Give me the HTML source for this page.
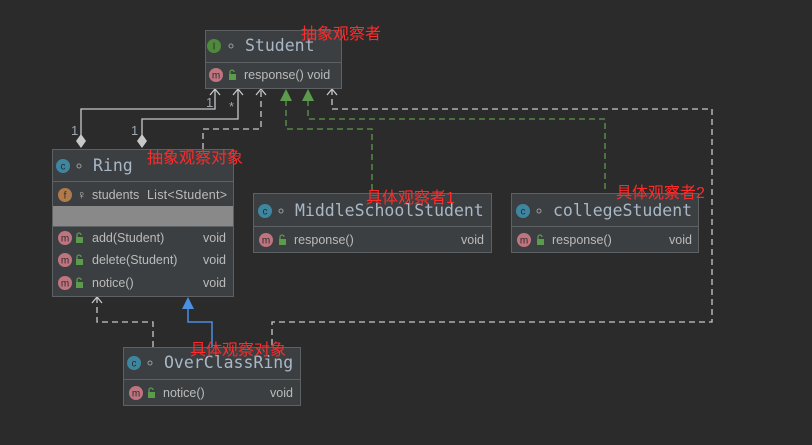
<!DOCTYPE html>
<html><head><meta charset="utf-8"><style>
html,body{margin:0;padding:0;background:#2b2b2b;}
svg{display:block}
.t{font-family:"DejaVu Sans Mono","Liberation Mono",monospace;font-size:16.5px;fill:#a9b7c6}
.m{font-family:"Liberation Sans",sans-serif;font-size:12.5px;fill:#bbbbbb}
.r{font-family:"Liberation Sans","Noto Sans CJK SC",sans-serif;font-size:16px;fill:#ff2b2b}
.ic{font-family:"Liberation Sans",sans-serif;font-size:10px;fill:#2b2b2b;text-anchor:middle}
.lbl{font-family:"Liberation Sans",sans-serif;font-size:13px;fill:#9aa7b4}
</style></head><body>
<svg width="812" height="445" xmlns="http://www.w3.org/2000/svg">
<defs>
<g id="mi"><circle r="7" fill="#c07480"/><text class="ic" y="3.5" fill="#3c3f41">m</text></g>
<g id="ci"><circle r="7" fill="#3e86a0"/><text class="ic" y="3.5">c</text></g>
<g id="lk"><rect x="-3" y="-1" width="7" height="6" fill="#5c9a4c"/><path d="M-2,-1 v-2 a2,2 0 0 1 4,0" fill="none" stroke="#5c9a4c" stroke-width="1.3"/></g>
</defs>
<g fill="none" stroke="#c8c8c8" stroke-width="1.3">
<path d="M81,140 V109 H215 V89"/>
<path d="M142,140 V119 H238 V89"/>
<path d="M203,149 V129 H261 V89" stroke-dasharray="6,4"/>
<path d="M332,89 V109 H712 V322 H272 V347" stroke-dasharray="6,4"/>
<path d="M153,347 V322 H97 V297" stroke-dasharray="6,4"/>
<path d="M210,95 L215,89 L220,95 M233,95 L238,89 L243,95 M256,95 L261,89 L266,95 M327,95 L332,89 L337,95 M92,303 L97,297 L102,303"/>
</g>
<g fill="none" stroke="#5c9a4c" stroke-width="1.3" stroke-dasharray="6,4">
<path d="M286,100 V129 H372 V193"/>
<path d="M308,100 V119 H605 V193"/>
</g>
<path d="M280,101 L286,89 L292,101Z M302,101 L308,89 L314,101Z" fill="#5c9a4c"/>
<path d="M212,347 V322 H188 V308" fill="none" stroke="#4a8fe0" stroke-width="1.5"/>
<path d="M182,309 L188,297 L194,309Z" fill="#4a8fe0"/>
<path d="M81,134 L86,141 L81,148 L76,141Z M142,134 L147,141 L142,148 L137,141Z" fill="#c8c8c8"/>
<text class="lbl" x="71" y="135">1</text><text class="lbl" x="131" y="135">1</text>
<text class="lbl" x="206" y="107">1</text><text class="lbl" x="229" y="111">*</text>

<rect x="205.5" y="30.5" width="136" height="58" fill="#3c3f41" stroke="#5e6163"/>
<line x1="205" y1="62.5" x2="341" y2="62.5" stroke="#5e6163"/>
<circle cx="214" cy="46" r="7" fill="#4f8a3c"/><text class="ic" x="214" y="49.5">I</text>
<circle cx="231" cy="46" r="2" fill="none" stroke="#999"/>
<text class="t" x="245" y="51">Student</text>
<use href="#mi" x="216" y="75"/><use href="#lk" x="232" y="75"/>
<text class="m" x="244" y="79">response() void</text>

<rect x="52.5" y="149.5" width="181" height="147" fill="#3c3f41" stroke="#5e6163"/>
<line x1="52" y1="181.5" x2="233" y2="181.5" stroke="#5e6163"/>
<rect x="53" y="206" width="180" height="20" fill="#898989"/>
<line x1="52" y1="226.5" x2="233" y2="226.5" stroke="#5e6163"/>
<use href="#ci" x="63" y="166"/><circle cx="79" cy="166" r="2" fill="none" stroke="#999"/>
<text class="t" x="93" y="171">Ring</text>
<circle cx="65" cy="195" r="7" fill="#b07a4a"/><text class="ic" x="65" y="198.5">f</text>
<text class="m" x="77" y="199" fill="#999">♀</text>
<text class="m" x="92" y="199">students</text><text class="m" x="147" y="199" textLength="80">List&lt;Student&gt;</text>
<use href="#mi" x="65" y="238"/><use href="#lk" x="79" y="238"/><text class="m" x="92" y="242">add(Student)</text><text class="m" x="203" y="242">void</text>
<use href="#mi" x="65" y="260"/><use href="#lk" x="79" y="260"/><text class="m" x="92" y="264">delete(Student)</text><text class="m" x="203" y="264">void</text>
<use href="#mi" x="65" y="283"/><use href="#lk" x="79" y="283"/><text class="m" x="92" y="287">notice()</text><text class="m" x="203" y="287">void</text>

<rect x="253.5" y="193.5" width="238" height="59" fill="#3c3f41" stroke="#5e6163"/>
<line x1="253" y1="226.5" x2="491" y2="226.5" stroke="#5e6163"/>
<use href="#ci" x="265" y="211"/><circle cx="281" cy="211" r="2" fill="none" stroke="#999"/>
<text class="t" x="295" y="216">MiddleSchoolStudent</text>
<use href="#mi" x="266" y="240"/><use href="#lk" x="282" y="240"/><text class="m" x="294" y="244">response()</text><text class="m" x="461" y="244">void</text>

<rect x="511.5" y="193.5" width="187" height="59" fill="#3c3f41" stroke="#5e6163"/>
<line x1="511" y1="226.5" x2="698" y2="226.5" stroke="#5e6163"/>
<use href="#ci" x="523" y="211"/><circle cx="539" cy="211" r="2" fill="none" stroke="#999"/>
<text class="t" x="553" y="216">collegeStudent</text>
<use href="#mi" x="524" y="240"/><use href="#lk" x="540" y="240"/><text class="m" x="552" y="244">response()</text><text class="m" x="669" y="244">void</text>

<rect x="123.5" y="347.5" width="177" height="58" fill="#3c3f41" stroke="#5e6163"/>
<line x1="123" y1="379.5" x2="300" y2="379.5" stroke="#5e6163"/>
<use href="#ci" x="134" y="363"/><circle cx="150" cy="363" r="2" fill="none" stroke="#999"/>
<text class="t" x="164" y="368">OverClassRing</text>
<use href="#mi" x="136" y="393"/><use href="#lk" x="151" y="393"/><text class="m" x="163" y="397">notice()</text><text class="m" x="270" y="397">void</text>

<text class="r" x="301" y="39">抽象观察者</text>
<text class="r" x="147" y="163">抽象观察对象</text>
<text class="r" x="366" y="203">具体观察者1</text>
<text class="r" x="616" y="198">具体观察者2</text>
<text class="r" x="190" y="355">具体观察对象</text>
</svg>
</body></html>
